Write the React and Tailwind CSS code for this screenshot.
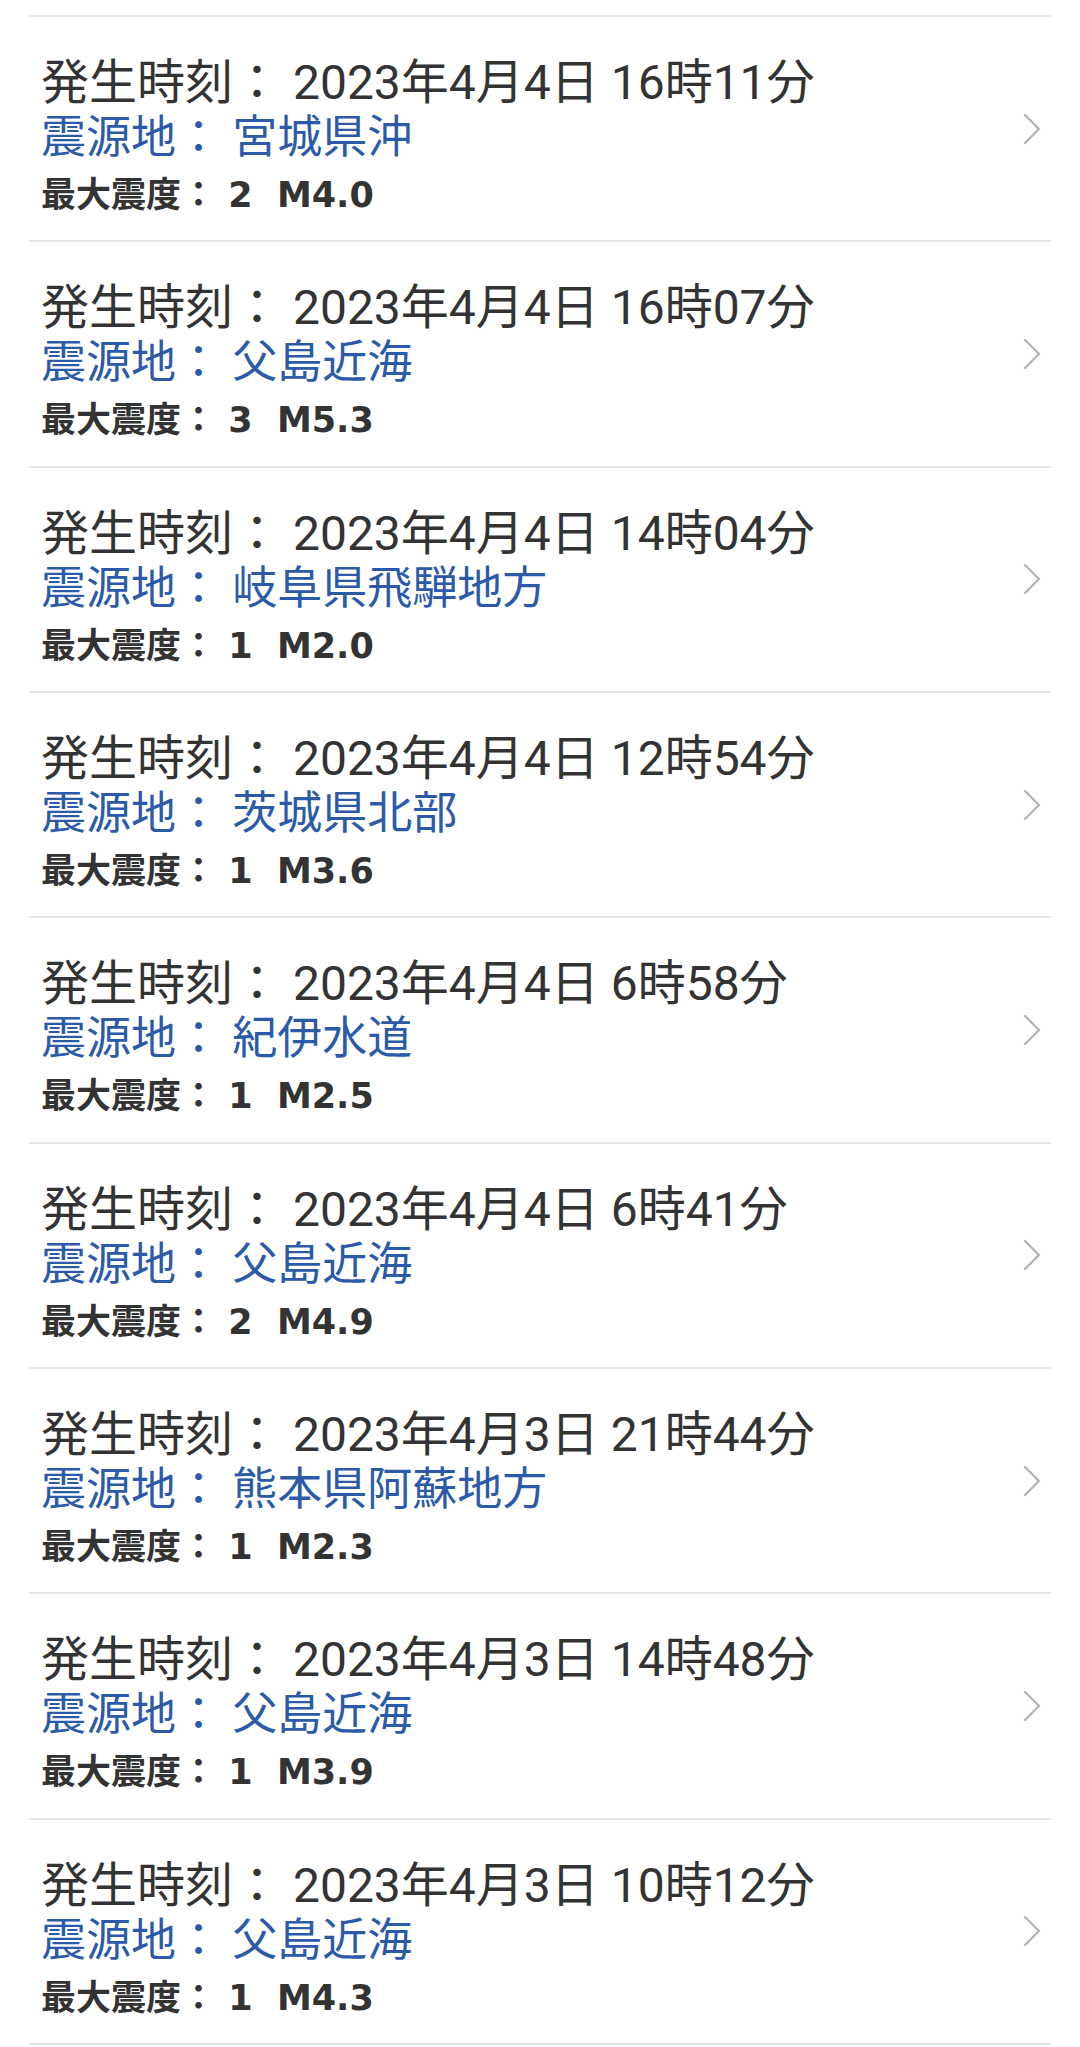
const quakes = [
  { time: "2023年4月4日 16時11分", place: "宮城県沖", shindo: "2", mag: "M4.0" },
  { time: "2023年4月4日 16時07分", place: "父島近海", shindo: "3", mag: "M5.3" },
  { time: "2023年4月4日 14時04分", place: "岐阜県飛騨地方", shindo: "1", mag: "M2.0" },
  { time: "2023年4月4日 12時54分", place: "茨城県北部", shindo: "1", mag: "M3.6" },
  { time: "2023年4月4日 6時58分", place: "紀伊水道", shindo: "1", mag: "M2.5" },
  { time: "2023年4月4日 6時41分", place: "父島近海", shindo: "2", mag: "M4.9" },
  { time: "2023年4月3日 21時44分", place: "熊本県阿蘇地方", shindo: "1", mag: "M2.3" },
  { time: "2023年4月3日 14時48分", place: "父島近海", shindo: "1", mag: "M3.9" },
  { time: "2023年4月3日 10時12分", place: "父島近海", shindo: "1", mag: "M4.3" },
];

const Chevron = () => (
  <svg width="18" height="32" viewBox="0 0 18 32" fill="none" className="shrink-0 self-center">
    <polyline
      points="2,2 16,16 2,30"
      stroke="#b4b4b4"
      strokeWidth="2.4"
      strokeLinecap="round"
      strokeLinejoin="round"
    />
  </svg>
);

const QuakeRow = ({ q }) => (
  <div className="border-t-2 border-[#e6e6e6] h-[225.35px] flex pl-[12px] pr-[10px]">
    <div className="flex-1 pt-[39px]">
      <p className="text-[48px] leading-[53px] text-[#333333] whitespace-pre">
        発生時刻： {q.time}
      </p>
      <p className="text-[45px] leading-[57px] text-[#2b5ba8] whitespace-pre">
        震源地： {q.place}
      </p>
      <p
        className="text-[35px] leading-[58px] font-bold text-[#333333] whitespace-pre"
        style={{ fontFamily: '"DejaVu Sans", "Noto Sans CJK JP", sans-serif' }}
      >
        最大震度： {q.shindo}  {q.mag}
      </p>
    </div>
    <Chevron />
  </div>
);

const App = () => {
  return (
    <div
      className="min-h-screen bg-white"
      style={{ fontFamily: 'Roboto, "Noto Sans CJK JP", sans-serif' }}
    >
      <div className="h-[15px]"></div>
      <div className="mx-[29px]">
        {quakes.map((q, i) => (
          <QuakeRow key={i} q={q} />
        ))}
        <div className="border-t-2 border-[#e6e6e6]"></div>
      </div>
    </div>
  );
};

export default App;
